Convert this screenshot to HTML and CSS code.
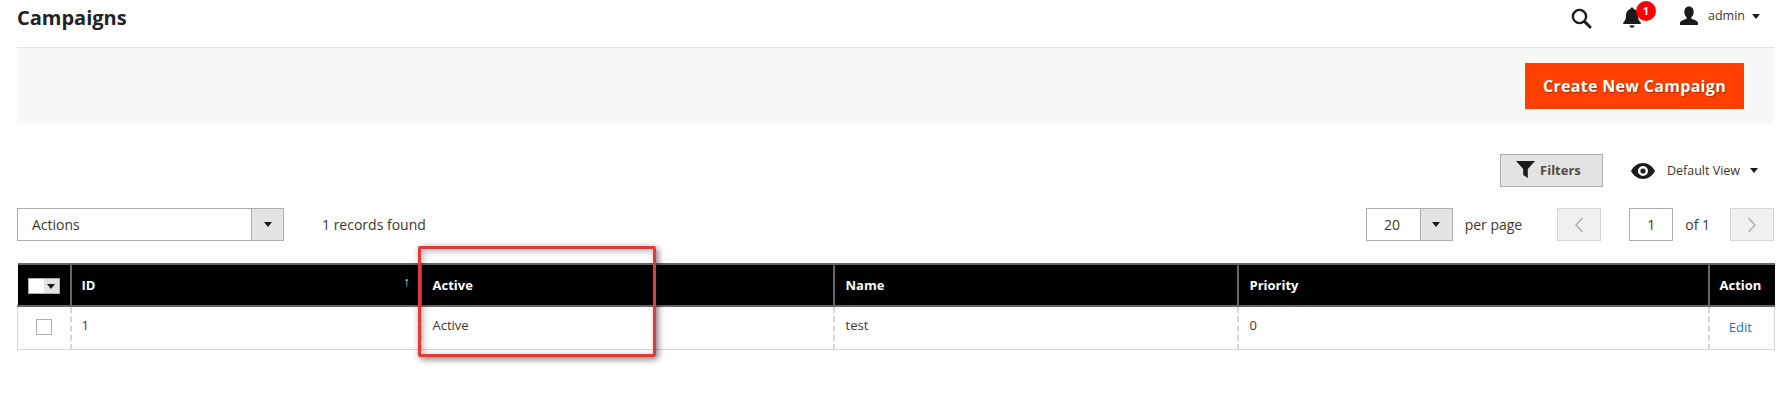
FILE: index.html
```html
<!DOCTYPE html>
<html lang="en">
<head>
  <meta charset="UTF-8">
  <title>Campaigns</title>
  <link rel="stylesheet" href="styles.css">
</head>
<body>
  <header class="top">
    <h1>Campaigns</h1>
    <div class="top-tools">
      <svg class="ico-search" width="22" height="22" viewBox="0 0 22 22"><circle cx="9.5" cy="9.5" r="6.6" fill="none" stroke="#1b1b1b" stroke-width="2.4"/><path d="M14.5 14.5L20 20" stroke="#1b1b1b" stroke-width="3" stroke-linecap="round"/></svg>
      <div class="bell">
        <svg width="20" height="22" viewBox="0 0 20 22"><path d="M10 1.5c1 0 1.6.7 1.7 1.6 3 .8 4.3 3.4 4.3 6.4 0 3.6 1 5.4 2.8 7.2v1.3H1.2v-1.3C3 14.900 4 13.100 4 9.500c0-3 1.300-5.600 4.300-6.400C8.400 2.200 9 1.500 10 1.500zM7.500 19.500h5c0 1.300-1.100 2.200-2.500 2.200s-2.500-.9-2.500-2.200z" fill="#1b1b1b"/></svg>
        <span class="badge">1</span>
      </div>
      <div class="user">
        <svg width="20" height="20" viewBox="0 0 20 20"><path d="M10 .5c3 0 4.700 2.300 4.700 5.200 0 2.400-1 4.500-2.300 5.600v1.500c2.600.9 5.900 1.900 6.600 3.700v2.500H1v-2.500c.7-1.800 4-2.800 6.600-3.700v-1.500C6.300 10.200 5.300 8.100 5.300 5.700 5.300 2.800 7 .5 10 .5z" fill="#1b1b1b"/></svg>
        <span>admin</span>
        <i class="caret"></i>
      </div>
    </div>
  </header>

  <div class="page-actions">
    <button class="btn-primary">Create New Campaign</button>
  </div>

  <div class="grid-tools">
    <button class="btn-filters">
      <svg width="19" height="17" viewBox="0 0 19 17"><path d="M0 0h19l-7.200 8v9l-4.600-3V8z" fill="#1b1b1b"/></svg>
      Filters
    </button>
    <div class="view">
      <svg width="24" height="16" viewBox="0 0 24 16"><path fill-rule="evenodd" d="M12 0c5 0 9.500 3.200 12 8-2.500 4.800-7 8-12 8S2.500 12.800 0 8c2.500-4.800 7-8 12-8zm0 3a5 5 0 1 0 0 10 5 5 0 0 0 0-10z" fill="#1b1b1b"/><circle cx="12" cy="8" r="2.600" fill="#1b1b1b"/></svg>
      <span>Default View</span>
      <i class="caret"></i>
    </div>
  </div>

  <div class="grid-bar">
    <div class="select select-actions">
      <span class="select-value">Actions</span>
      <span class="select-arrow"><i class="caret"></i></span>
    </div>
    <span class="records">1 records found</span>
    <div class="pager">
      <div class="select select-size">
        <span class="select-value">20</span>
        <span class="select-arrow"><i class="caret"></i></span>
      </div>
      <span class="per-page">per page</span>
      <button class="page-btn">
        <svg width="10" height="16" viewBox="0 0 10 16"><path d="M8.500 1L2 8l6.500 7" fill="none" stroke="#aaa" stroke-width="1.300"/></svg>
      </button>
      <span class="page-input">1</span>
      <span class="page-of">of 1</span>
      <button class="page-btn">
        <svg width="10" height="16" viewBox="0 0 10 16"><path d="M1.500 1L8 8l-6.500 7" fill="none" stroke="#aaa" stroke-width="1.300"/></svg>
      </button>
    </div>
  </div>

  <div class="table-wrap">
    <table class="grid">
      <colgroup>
        <col class="c-check"><col class="c-id"><col class="c-active"><col class="c-name"><col class="c-priority"><col class="c-action">
      </colgroup>
      <thead>
        <tr>
          <th><span class="multi"><span class="multi-box"></span><span class="multi-arrow"><i class="caret caret-small"></i></span></span></th>
          <th class="sorted">ID<span class="sort-arrow">↑</span></th>
          <th>Active</th>
          <th>Name</th>
          <th>Priority</th>
          <th>Action</th>
        </tr>
      </thead>
      <tbody>
        <tr>
          <td class="check-cell"><span class="checkbox"></span></td>
          <td class="id-cell">1</td>
          <td>Active</td>
          <td>test</td>
          <td>0</td>
          <td class="action-cell"><a href="#">Edit</a></td>
        </tr>
      </tbody>
    </table>
    <div class="highlight"></div>
  </div>
</body>
</html>
```

FILE: styles.css
```css
* {
  box-sizing: border-box;
}
body {
  margin: 0;
  min-height: 410px;
  padding: 0 14px 0 17px;
  font-family: "Open Sans", sans-serif;
  font-size: 14px;
  color: #41362f;
  background: #fff;
}
button {
  font-family: inherit;
}
.caret {
  display: inline-block;
  width: 0;
  height: 0;
  border-left: 4.5px solid transparent;
  border-right: 4.5px solid transparent;
  border-top: 5px solid #1b1b1b;
}

/* header */
.top {
  display: flex;
  justify-content: space-between;
  align-items: flex-start;
  height: 48px;
  border-bottom: 1px solid #e3e3e3;
}
h1 {
  margin: 0;
  font-size: 20px;
  line-height: 36px;
  font-weight: 700;
  color: #1f2328;
}
.top-tools {
  display: flex;
  align-items: center;
  height: 32px;
  padding-right: 14px;
}
.ico-search {
  margin: 3px 30px 0 0;
}
.bell {
  position: relative;
  width: 20px;
  height: 22px;
  margin: 2px 37px 0 0;
}
.badge {
  position: absolute;
  top: -5px;
  left: 14px;
  width: 20px;
  height: 20px;
  border-radius: 50%;
  background: #f00;
  color: #fff;
  font-size: 11px;
  font-weight: 700;
  line-height: 20px;
  text-align: center;
}
.user {
  display: flex;
  align-items: center;
  font-size: 12.5px;
  color: #41362f;
}
.user span {
  margin: 0 7px 0 9px;
  position: relative;
  top: -1px;
}

/* page actions */
.page-actions {
  display: flex;
  justify-content: flex-end;
  height: 76px;
  padding: 15px 30px 0 0;
  background: #f8f8f8;
}
.btn-primary {
  width: 219px;
  height: 46px;
  border: 0;
  background: #ff4000;
  color: #fff;
  font-size: 16px;
  font-weight: 700;
  letter-spacing: .3px;
  text-shadow: 1px 1px 1px rgba(0,0,0,.35);
}

/* filters row */
.grid-tools {
  display: flex;
  justify-content: flex-end;
  align-items: center;
  height: 33px;
  margin-top: 30px;
  padding-right: 16px;
}
.btn-filters {
  display: flex;
  align-items: center;
  justify-content: center;
  gap: 5px;
  width: 103px;
  height: 33px;
  margin-right: 28px;
  padding: 0 8px 2px 2px;
  border: 1px solid #adadad;
  background: #e3e3e3;
  color: #514943;
  font-size: 13px;
  font-weight: 700;
}
.view {
  display: flex;
  align-items: center;
  font-size: 12.5px;
  color: #41362f;
}
.view span {
  margin: 0 10px 0 12px;
}

/* actions and pager */
.grid-bar {
  display: flex;
  align-items: center;
  height: 33px;
  margin-top: 21px;
}
.select {
  display: flex;
  height: 33px;
  border: 1px solid #adadad;
  background: #fff;
}
.select-value {
  flex: 1;
  line-height: 31px;
}
.select-arrow {
  display: flex;
  align-items: center;
  justify-content: center;
  width: 32px;
  border-left: 1px solid #adadad;
  background: #e3e3e3;
}
.select-actions {
  width: 267px;
}
.select-actions .select-value {
  padding-left: 14px;
}
.records {
  margin-left: 38px;
}
.pager {
  display: flex;
  align-items: center;
  margin-left: auto;
}
.select-size {
  width: 87px;
}
.select-size .select-value {
  padding-right: 2px;
  text-align: center;
}
.per-page {
  margin: 0 35px 0 12px;
}
.page-btn {
  display: flex;
  align-items: center;
  justify-content: center;
  width: 44px;
  height: 33px;
  padding: 0;
  border: 1px solid #d6d6d6;
  background: #f0f0f0;
}
.page-input {
  width: 44px;
  height: 33px;
  margin-left: 28px;
  border: 1px solid #adadad;
  line-height: 31px;
  text-align: center;
}
.page-of {
  margin: 0 20px 0 12px;
}

/* table */
.table-wrap {
  position: relative;
  margin-top: 22px;
}
.grid {
  width: 100%;
  border-collapse: collapse;
  table-layout: fixed;
  font-size: 13px;
}
.c-check { width: 53px; }
.c-id { width: 350px; }
.c-active { width: 413px; }
.c-name { width: 404px; }
.c-priority { width: 471px; }
.c-action { width: 66px; }
.grid th {
  height: 42px;
  padding: 0 10px 0 11px;
  border: 2px solid #666;
  background: #000;
  color: #fff;
  font-weight: 700;
  text-align: left;
  white-space: nowrap;
}
.grid th:first-child {
  padding: 0;
  text-align: center;
  border-left: 0;
}
.grid th:last-child {
  padding-left: 10px;
  border-right: 0;
}
.grid td {
  height: 43px;
  padding: 9px 10px 0 11px;
  border: 1px solid #d6d6d6;
  border-left: 2px dashed #d6d6d6;
  vertical-align: top;
}
.grid td:first-child {
  border-left: 1px solid #d6d6d6;
}
.grid .sorted,
.grid .id-cell {
  padding-left: 10px;
}
.sorted {
  position: relative;
}
.sort-arrow {
  position: absolute;
  top: 8px;
  right: 10px;
  font-size: 12px;
  font-weight: 400;
}
.multi {
  display: inline-flex;
  vertical-align: middle;
  height: 16px;
  border: 1px solid #adadad;
}
.multi-box {
  width: 15px;
  background: #fff;
}
.multi-arrow {
  display: flex;
  align-items: center;
  justify-content: center;
  width: 15px;
  background: #e3e3e3;
}
.caret-small {
  border-left-width: 4px;
  border-right-width: 4px;
}
.check-cell {
  text-align: center;
}
.checkbox {
  display: inline-block;
  width: 16px;
  height: 16px;
  border: 1px solid #adadad;
  vertical-align: top;
  margin-top: 3px;
}
.grid .action-cell {
  padding: 9px 12px 0 9px;
  text-align: center;
}
.action-cell a {
  display: block;
  margin-top: 2px;
  color: #1a6fe0;
  text-decoration: none;
}

/* red annotation drawn over the table */
.highlight {
  position: absolute;
  z-index: 2;
  top: -17px;
  left: 401px;
  width: 238px;
  height: 111px;
  border: 3px solid #e03a3a;
  border-radius: 2px;
  box-shadow: 2px 2px 7px rgba(0,0,0,.55), inset 2px 2px 7px rgba(0,0,0,.3);
}
```
